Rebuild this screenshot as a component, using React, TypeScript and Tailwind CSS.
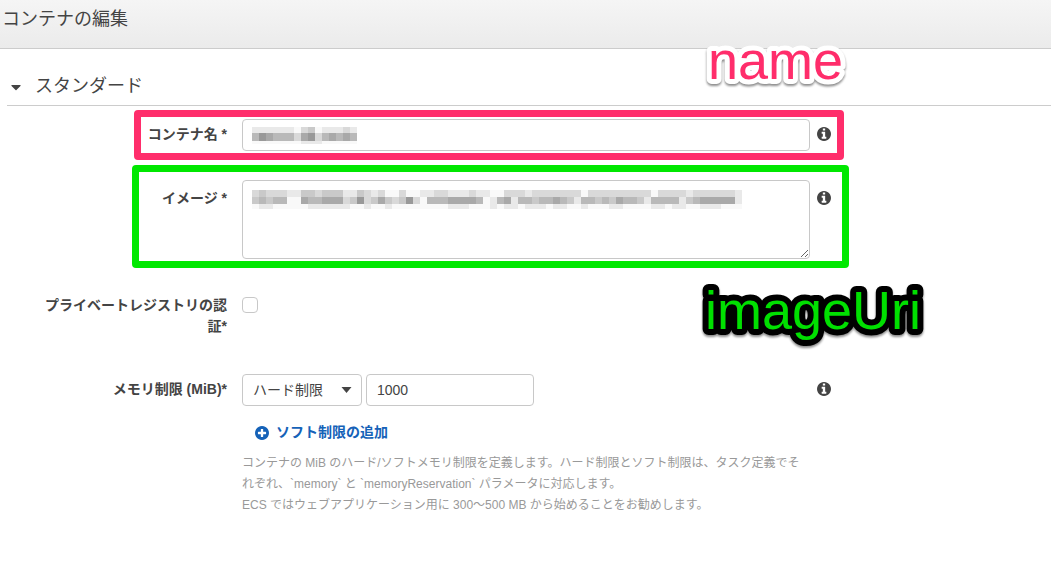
import React, { useState } from 'react';
import { FaCaretDown } from 'react-icons/fa';
import { clsx } from 'clsx';

interface MaskBand {
  height: number;
  cells: string;
}

// One hex digit per 7px block, darker digits are lower
const NAME_MASK: MaskBand[] = [
  { height: 6, cells: 'eeeeeefdcfeeede' },
  { height: 8, cells: 'b9abbbda9dbabab' },
  { height: 3, cells: 'fffffffeeefffff' },
];

const IMAGE_MASK: MaskBand[] = [
  { height: 7, cells: 'dcdddeeccdccceecdedffdffeeddeeedeeffdddedddddddfdddddddddfddddedddddde' },
  { height: 7, cells: 'cbcbbffabbaaadc9dcacdc9dfbbbaaaabfebaebbcbbabcebbcbcabbcebbbbecbaaaaae' },
  { height: 5, cells: 'feefffffeeeeeeffeffeffffffffeeefffefeefeeefeeffefffeeffffeefeeffeeefff' },
];

const CIRCLE = 'm0 0M1536 768q0 209-103 385.5t-279.5 279.5-385.5 103-385.5-103-279.5-279.5-103-385.5 103-385.5 279.5-279.5 385.5-103 385.5 103 279.5 279.5 103 385.5z';
const INFO =
  'M1024 1248v-160q0-14-9-23t-23-9h-96v-512q0-14-9-23t-23-9h-320q-14 0-23 9t-9 23v160q0 14 9 23t23 9h96v320h-96q-14 0-23 9t-9 23v160q0 14 9 23t23 9h448q14 0 23-9t9-23zM896 352v-160q0-14-9-23t-23-9h-192q-14 0-23 9t-9 23v160q0 14 9 23t23 9h192q14 0 23-9t9-23z';
const PLUS =
  'M1216 832v-128q0-26-19-45t-45-19h-256v-256q0-26-19-45t-45-19h-128q-26 0-45 19t-19 45v256h-256q-26 0-45 19t-19 45v128q0 26 19 45t45 19h256v256q0 26 19 45t45 19h128q26 0 45-19t19-45v-256h256q26 0 45-19t19-45z';

const fieldClass = 'w-full rounded border border-[#c8c8c8] bg-white px-[10px] text-sm text-[#444]';

function CircleIcon({ glyph }: { glyph: string }) {
  return (
    <svg width="14" height="14" viewBox="0 0 1536 1536" fill="currentColor" aria-hidden="true">
      <path fillRule="evenodd" d={`${glyph}${CIRCLE}`} />
    </svg>
  );
}

function Mask({ bands, className }: { bands: MaskBand[]; className?: string }) {
  const width = bands[0].cells.length * 7;
  const height = bands.reduce((acc, band) => acc + band.height, 0);
  let y = 0;

  return (
    <svg
      className={clsx('pointer-events-none absolute left-[10px]', className)}
      width={width}
      height={height}
      shapeRendering="crispEdges"
      aria-hidden="true"
    >
      {bands.map((band, row) => {
        const top = y;
        y += band.height;
        return band.cells.split('').map((cell, i) => (
          <rect
            key={`${row}-${i}`}
            x={i * 7}
            y={top}
            width={7}
            height={band.height}
            fill={`#${`${cell}9`.repeat(3)}`}
          />
        ));
      })}
    </svg>
  );
}

function InfoButton({ label, className }: { label: string; className?: string }) {
  return (
    <button type="button" aria-label={label} className={clsx('h-[14px] w-[14px] text-[#444]', className)}>
      <CircleIcon glyph={INFO} />
    </button>
  );
}

interface FormRowProps {
  label: string;
  htmlFor: string;
  labelClass?: string;
  className?: string;
  info?: React.ReactNode;
  children: React.ReactNode;
}

function FormRow({ label, htmlFor, labelClass, className, info, children }: FormRowProps) {
  return (
    <div className={clsx('relative grid grid-cols-[189px_minmax(0,1fr)_14px]', className)}>
      <label htmlFor={htmlFor} className={clsx('text-right text-sm leading-[21px] font-bold', labelClass)}>
        {label}
      </label>
      <div className="mr-[7px] ml-[15px]">{children}</div>
      {info}
    </div>
  );
}

interface CalloutProps {
  text: string;
  fill: string;
  outline: string;
  outlineWidth: number;
  className: string;
}

// Outlined callout word
function Callout({ text, fill, outline, outlineWidth, className }: CalloutProps) {
  return (
    <svg
      className={clsx('pointer-events-none absolute overflow-visible drop-shadow-[0_2px_1px_rgba(0,0,0,0.45)]', className)}
      width="230"
      height="64"
    >
      <text
        x="4"
        y="48"
        stroke={outline}
        strokeWidth={outlineWidth}
        strokeLinejoin="round"
        paintOrder="stroke"
        fill={fill}
        fontSize="54"
        fontFamily="'Liberation Sans', Arial, sans-serif"
      >
        {text}
      </text>
    </svg>
  );
}

export default function App() {
  const [limitType, setLimitType] = useState('hard');
  const [memory, setMemory] = useState('1000');
  const [privateAuth, setPrivateAuth] = useState(false);

  return (
    <div className="relative min-h-screen overflow-hidden bg-white font-['Liberation_Sans','Noto_Sans_CJK_JP',sans-serif] text-[#444]">
      <header className="border-b border-[#ccc] bg-linear-to-b from-[#f5f5f5] to-[#ebebeb] px-[2px] pt-[5px] pb-[15px]">
        <h1 className="text-lg leading-7">コンテナの編集</h1>
      </header>

      <main>
        <h2 className="ml-[7px] border-b border-[#ccc] pt-[23px] pb-[5px] text-lg leading-7">
          <button type="button" className="flex items-center">
            <FaCaretDown size={16} className="mt-[2px] mr-[11px] ml-[1px] text-[#444]" />
            スタンダード
          </button>
        </h2>

        <form className="ml-[38px] max-w-[793px] pt-[13px]" onSubmit={(e) => e.preventDefault()}>
          <FormRow
            label="コンテナ名 *"
            htmlFor="container-name"
            labelClass="pt-[5px]"
            info={<InfoButton label="コンテナ名" className="mt-2" />}
          >
            <div className="relative">
              <input id="container-name" type="text" className={clsx(fieldClass, 'block h-8')} />
              <Mask bands={NAME_MASK} className="top-2" />
            </div>
            <div className="pointer-events-none absolute -top-[9px] -right-[13px] -bottom-[9px] left-[96px] rounded border-[7px] border-[#ff2d6b]" />
          </FormRow>

          <FormRow
            label="イメージ *"
            htmlFor="container-image"
            className="mt-[29px]"
            labelClass="pt-2"
            info={<InfoButton label="イメージ" className="mt-[11px]" />}
          >
            <div className="relative">
              <textarea id="container-image" className={clsx(fieldClass, 'block h-[79px] py-2')} />
              <Mask bands={IMAGE_MASK} className="top-[10px]" />
            </div>
            <div className="pointer-events-none absolute -top-[15px] -right-[18px] -bottom-[9px] left-[94px] rounded border-[7px] border-[#00e800]" />
          </FormRow>

          <FormRow label="プライベートレジストリの認証*" htmlFor="private-auth" className="mt-9">
            <input
              id="private-auth"
              type="checkbox"
              checked={privateAuth}
              onChange={(e) => setPrivateAuth(e.target.checked)}
              className="mt-[2px] block h-4 w-4 appearance-none rounded border border-[#c8c8c8] bg-white checked:bg-[#1166bb]"
            />
          </FormRow>

          <FormRow
            label="メモリ制限 (MiB)*"
            htmlFor="memory-limit"
            className="mt-[37px]"
            labelClass="pt-[5px]"
            info={<InfoButton label="メモリ制限" className="mt-2" />}
          >
            <div className="flex gap-1">
              <div className="relative w-[120px]">
                <select
                  aria-label="制限の種類"
                  value={limitType}
                  onChange={(e) => setLimitType(e.target.value)}
                  className={clsx(fieldClass, 'block h-8 appearance-none')}
                >
                  <option value="hard">ハード制限</option>
                  <option value="soft">ソフト制限</option>
                </select>
                <svg className="pointer-events-none absolute top-[13px] right-[10px]" width="11" height="6" viewBox="0 0 11 6">
                  <path d="M0.5 0h10L5.5 6z" fill="#444" />
                </svg>
              </div>
              <input
                id="memory-limit"
                type="text"
                value={memory}
                onChange={(e) => setMemory(e.target.value)}
                className={clsx(fieldClass, 'block h-8 max-w-[168px]')}
              />
            </div>
            <button type="button" className="mt-4 ml-[13px] flex items-center gap-[7px] text-sm leading-[21px] font-bold text-[#1562b8]">
              <CircleIcon glyph={PLUS} />
              ソフト制限の追加
            </button>
            <p className="mt-[10px] text-xs leading-[21px] text-[#999]">
              コンテナの MiB のハード/ソフトメモリ制限を定義します。ハード制限とソフト制限は、タスク定義でそれぞれ、`memory` と `memoryReservation` パラメータに対応します。
              <br />
              ECS ではウェブアプリケーション用に 300〜500 MB から始めることをお勧めします。
            </p>
          </FormRow>
        </form>
      </main>

      <Callout text="name" fill="#ff2d6b" outline="#fff" outlineWidth={10} className="top-[31px] left-[704px]" />
      <Callout text="imageUri" fill="#00e000" outline="#000" outlineWidth={12} className="top-[281px] left-[701px]" />
    </div>
  );
}
